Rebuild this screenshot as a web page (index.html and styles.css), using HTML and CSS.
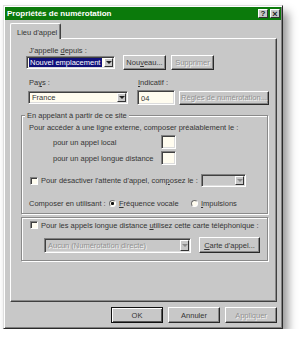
FILE: index.html
```html
<!DOCTYPE html>
<html lang="fr">
<head>
    <meta charset="UTF-8">
    <title>Propriétés de numérotation</title>
    <link rel="stylesheet" href="styles.css">
</head>
<body>
<div class="page">
    <div class="dialog">
        <div class="titlebar">
            <span class="title">Propriétés de numérotation</span>
            <span class="tbtn">?</span>
            <span class="tbtn close">×</span>
        </div>
        <div class="content">
            <div class="tabs"><div class="tab">Lieu d'appel</div></div>
            <div class="panel">
                <div class="top">
                    <div class="lbl first">J'appelle <u>d</u>epuis :</div>
                    <div class="row1">
                        <div class="combo loc"><span class="sel">Nouvel emplacement</span><span class="arrow"></span></div>
                        <div class="btn nouv">Nou<u>v</u>eau...</div>
                        <div class="btn supp off">Supprimer</div>
                    </div>
                    <div class="lblrow">
                        <span class="pays">Pa<u>y</u>s :</span>
                        <span><u>I</u>ndicatif :</span>
                    </div>
                    <div class="row2">
                        <div class="combo pays-box"><span class="val">France</span><span class="arrow"></span></div>
                        <div class="field ind">04</div>
                        <div class="btn regles off">Règles de numérotation...</div>
                    </div>
                </div>

                <div class="group one">
                    <div class="legend">En appelant à partir de ce site</div>
                    <div class="g-line">Pour accéder à une ligne externe, composer préalablement le :</div>
                    <div class="sub">
                        <span class="sub-lbl">pour un appel local</span>
                        <div class="field small"></div>
                    </div>
                    <div class="sub second">
                        <span class="sub-lbl">pour un appel longue distance</span>
                        <div class="field small"></div>
                    </div>
                    <div class="chkrow">
                        <span class="chk"></span>
                        <span class="chk-lbl">Pour désactiver l'attente d'appel, com<u>p</u>osez le :</span>
                        <div class="combo dis wait"><span class="val"></span><span class="arrow"></span></div>
                    </div>
                    <div class="radrow">
                        <span class="rad-lbl">Composer en utilisant :</span>
                        <span class="radio on"></span>
                        <span class="rad-txt"><u>F</u>réquence vocale</span>
                        <span class="radio"></span>
                        <span><u>I</u>mpulsions</span>
                    </div>
                </div>

                <div class="group two">
                    <div class="chkrow2">
                        <span class="chk"></span>
                        <span class="chk-lbl">Pour les appels longue distance <u>u</u>tilisez cette carte téléphonique :</span>
                    </div>
                    <div class="cardrow">
                        <div class="combo dis card"><span class="val">Aucun (Numérotation directe)</span><span class="arrow"></span></div>
                        <div class="btn carte"><u>C</u>arte d'appel...</div>
                    </div>
                </div>
            </div>
            <div class="actions">
                <div class="btn act default">OK</div>
                <div class="btn act">Annuler</div>
                <div class="btn act off">Appliquer</div>
            </div>
        </div>
    </div>
</div>
</body>
</html>
```
FILE: styles.css
```css
*{margin:0;padding:0;box-sizing:border-box;}
body{
    background:#fff;
    font-family:"Liberation Sans",Arial,sans-serif;
    font-size:7.5px;
    color:#353535;
}
u{text-decoration:underline;}
.page{padding:5px 0 0 3px;}

.dialog{
    width:280px;
    height:324px;
    background:#c8c8c8;
    border:1px solid;
    border-color:#dedede #2a2a2a #2a2a2a #dedede;
    box-shadow:inset 1px 1px 0 #fff,inset -1px -1px 0 #808080,5px 7px 9px rgba(0,0,0,.42);
    padding:1px;
}

/* barre de titre */
.titlebar{
    height:13px;
    background:#0b7a0b;
    display:flex;
    align-items:center;
    padding:0 1px 0 2px;
    color:#fff;
    font-weight:bold;
    font-size:8px;
}
.title{flex:1;}
.tbtn{
    width:10px;
    height:9px;
    margin-left:1px;
    background:#c8c8c8;
    color:#222;
    font-size:8px;
    line-height:8px;
    text-align:center;
    border:1px solid;
    border-color:#fff #333 #333 #fff;
}
.tbtn.close{margin-left:2px;font-size:9px;}

.content{padding:3px 4px 0 5px;}

/* onglet */
.tabs{display:flex;}
.tab{
    position:relative;
    z-index:1;
    width:51px;
    height:16px;
    margin-bottom:-1px;
    padding:4px 0 0 6px;
    background:#c8c8c8;
    border:1px solid;
    border-bottom:none;
    border-color:#fff #404040 #c8c8c8 #fff;
    border-radius:2px 2px 0 0;
    box-shadow:inset -1px 0 0 #808080;
}
.panel{
    height:264px;
    border:1px solid;
    border-color:#fff #404040 #404040 #fff;
    box-shadow:inset -1px -1px 0 #8a8a8a;
}

/* controles */
.btn{
    display:flex;
    align-items:center;
    justify-content:center;
    background:#c8c8c8;
    border:1px solid;
    border-color:#fff #2a2a2a #2a2a2a #fff;
    box-shadow:inset -1px -1px 0 #868686;
    white-space:nowrap;
}
.off{color:#929292;text-shadow:1px 1px 0 #f4f4f4;}
.field{
    background:#fffcef;
    border:1px solid;
    border-color:#808080 #fff #fff #808080;
    box-shadow:inset 1px 1px 0 #404040,inset -1px -1px 0 #dcdcdc;
}
.combo{
    display:flex;
    align-items:center;
    background:#fffcef;
    border:1px solid;
    border-color:#808080 #fff #fff #808080;
    box-shadow:inset 1px 1px 0 #404040,inset -1px -1px 0 #dcdcdc;
    padding:1px 1px 1px 2px;
}
.combo .val{flex:1;padding-left:1px;white-space:nowrap;overflow:hidden;}
.combo .sel{
    flex:1;
    background:#10107a;
    color:#fff;
    padding-left:1px;
    line-height:9px;
    white-space:nowrap;
    overflow:hidden;
    margin-right:2px;
}
.arrow{
    width:9px;
    height:100%;
    display:flex;
    align-items:center;
    justify-content:center;
    background:#c8c8c8;
    border:1px solid;
    border-color:#fff #333 #333 #fff;
}
.arrow::after{
    content:"";
    border-top:3px solid #222;
    border-left:3px solid transparent;
    border-right:3px solid transparent;
}
.combo.dis{background:#c8c8c8;color:#929292;text-shadow:1px 1px 0 #f4f4f4;}
.combo.dis .arrow::after{border-top-color:#8a8a8a;}

/* haut du panneau */
.top{padding-left:15px;}
.lbl{height:8px;line-height:8px;padding-left:3px;}
.lbl.first{margin-top:8px;}
.row1{display:flex;align-items:center;height:15px;}
.combo.loc{width:89px;height:13px;}
.btn.nouv{width:43px;height:15px;margin-left:8px;}
.btn.supp{width:43px;height:15px;margin-left:5px;}
.lblrow{display:flex;height:8px;line-height:8px;margin-top:9px;}
.lblrow .pays{width:112px;padding-left:3px;}
.row2{display:flex;align-items:center;height:15px;margin-top:3px;}
.combo.pays-box{width:100px;height:13px;margin-left:2px;}
.field.ind{width:38px;height:15px;margin-left:9px;padding:3px 0 0 3px;}
.btn.regles{width:90px;height:14px;margin-left:4px;}

/* cadres */
.group{
    margin:0 8px 0 10px;
    border:1px solid #8a8a8a;
    box-shadow:inset 1px 1px 0 #fff,1px 1px 0 #fff;
}
.group.one{margin-top:10px;padding-bottom:4px;}
.group.two{margin-top:3px;padding-bottom:7px;}
.legend{
    display:table;
    margin:-5px 0 0 3px;
    padding:0 2px;
    line-height:9px;
    background:#c8c8c8;
}
.g-line{height:8px;line-height:8px;margin-top:4px;padding-left:7px;}
.sub{display:flex;align-items:center;height:14px;margin-top:3px;padding-left:31px;}
.sub.second{margin-top:2px;}
.sub-lbl{width:108px;}
.field.small{width:15px;height:14px;}

.chkrow{display:flex;align-items:center;height:13px;margin-top:9px;padding-left:8px;}
.chk{
    width:8px;
    height:8px;
    background:#fffcef;
    border:1px solid;
    border-color:#808080 #fff #fff #808080;
    box-shadow:inset 1px 1px 0 #404040;
}
.chk-lbl{margin-left:3px;}
.chkrow .chk-lbl{width:160px;}
.combo.wait{width:45px;height:13px;}

.radrow{display:flex;align-items:center;height:12px;margin-top:10px;padding-left:7px;}
.rad-lbl{width:80px;}
.radio{
    width:7px;
    height:7px;
    margin-right:3px;
    border-radius:50%;
    background:#fffcef;
    border:1px solid;
    border-color:#707070 #fff #fff #707070;
}
.radio.on{background:radial-gradient(circle,#111 1.3px,#fffcef 1.8px);}
.rad-txt{width:72px;}

.chkrow2{display:flex;align-items:center;height:8px;margin-top:3px;padding-left:8px;}
.cardrow{display:flex;align-items:center;height:16px;margin-top:8px;padding-left:22px;}
.combo.card{width:147px;height:15px;}
.btn.carte{width:61px;height:16px;margin-left:8px;}

/* boutons du bas */
.actions{display:flex;justify-content:flex-end;gap:5px;margin-top:5px;}
.btn.act{width:52px;height:16px;}
.btn.default{border-color:#111;box-shadow:inset 1px 1px 0 #fff,inset -1px -1px 0 #555;}
```
